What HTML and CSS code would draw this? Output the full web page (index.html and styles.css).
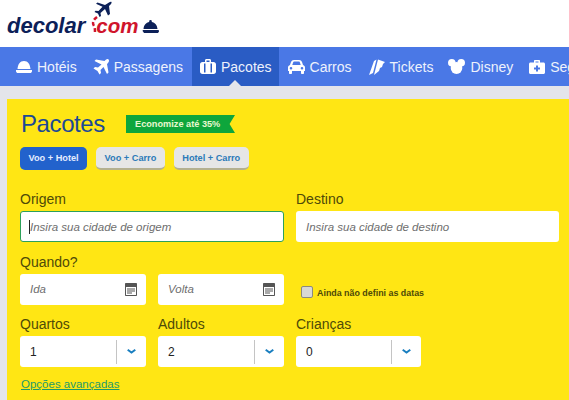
FILE: index.html
```html
<!DOCTYPE html>
<html lang="pt">
<head>
  <meta charset="UTF-8">
  <meta name="viewport" content="width=device-width, initial-scale=1.0">
  <title>Decolar - Pacotes</title>
  <link rel="stylesheet" href="styles.css">
</head>
<body>
  <header class="top">
    <div class="logo">
      <span class="logo-name">decolar</span>
      <svg class="logo-mark" width="24" height="38" viewBox="0 0 24 38">
        <path fill="#0c2058" d="M21 2.500c1.500-1 3-1 2.500.5-.3 1-1.300 2-2.500 3l1 8-2 1.500-3-6.500-4.500 4 .5 3-1.500 1-1.500-3.500-3.500-1.500 1-1.300 3 .3 4-4.300-6.500-3L9.500 2.500l7.500 2.500z"/>
        <path fill="none" stroke="#d0142c" stroke-width="2.500" stroke-dasharray="4 2.500" d="M9 17c-4 3-5 6-3 9 1 1.500 1 4 1 8"/>
      </svg>
      <span class="logo-com">com</span>
      <svg class="logo-bell" width="17" height="14" viewBox="0 0 17 14">
        <path fill="#0c2058" d="M8.500 0a1.300 1.300 0 0 1 1.200 1.900C13 2.400 15.200 5 15.500 9h-14C1.800 5 4 2.400 7.300 1.900A1.300 1.300 0 0 1 8.500 0zM1 10h15a1 1 0 0 1 1 1.500l-1 1.500H2l-1-1.500A1 1 0 0 1 1 10z"/>
      </svg>
    </div>
  </header>

  <nav class="nav">
    <a class="nav-item nav-item-flush">
      <svg width="16" height="12" viewBox="0 0 16 12"><path fill="#fff" d="M8 0c4 0 6 3 6.500 8H1.500C2 3 4 0 8 0zM0 9h16v1.500L15 12H1L0 10.500z"/></svg>
      Hotéis
    </a>
    <a class="nav-item">
      <svg width="16" height="16" viewBox="0 0 16 16"><path fill="#fff" d="M15.500.5c1 1 .5 2.500-1.500 4.500l1.500 8.500-1.500 1.500-3.500-7L7.500 11l.5 3-1.500 1.500L4.500 12 .5 9.500 2 8l3 .5 3.500-3-7-3.500L3 .5l8.500 1.500C13 .5 14.500-.5 15.500.5z"/></svg>
      Passagens
    </a>
    <a class="nav-item nav-item-active">
      <svg width="16" height="15" viewBox="0 0 16 15"><path fill="#fff" fill-rule="evenodd" d="M5 3V1.500C5 .500 5.700 0 6.500 0h3C10.300 0 11 .500 11 1.500V3h2.500C15 3 16 4 16 5.500v7c0 1.500-1 2.500-2.500 2.500h-11C1 15 0 14 0 12.500v-7C0 4 1 3 2.500 3zm1.500 0h3V1.500h-3zM4 4.500V13.500h1.500V4.500zm6.500 0V13.500H12V4.500z"/></svg>
      Pacotes
    </a>
    <a class="nav-item">
      <svg width="17" height="14" viewBox="0 0 17 14"><path fill="#fff" fill-rule="evenodd" d="M3 2C3.500.700 4.500 0 6 0h5c1.500 0 2.500.700 3 2l1 3c1.300.400 2 1.300 2 2.500V11h-1v2c0 .600-.400 1-1 1h-1c-.600 0-1-.400-1-1v-2H4v2c0 .600-.400 1-1 1H2c-.600 0-1-.400-1-1v-2H0V7.500C0 6.300.700 5.400 2 5zm1.300 3h8.400l-.8-2.500c-.2-.6-.5-1-1.200-1H6.300c-.7 0-1 .4-1.200 1zM3 7a1.300 1.300 0 1 0 0 2.600A1.300 1.300 0 0 0 3 7zm11 0a1.300 1.300 0 1 0 0 2.600A1.300 1.300 0 0 0 14 7z"/></svg>
      Carros
    </a>
    <a class="nav-item nav-item-tight">
      <svg width="16" height="16" viewBox="0 0 16 16"><path fill="#fff" d="M5 2l2.500-1.500L4 14l-4 2zM9 .5L16 3l-2 2-1 3-2 1-1 3-5 4z"/></svg>
      Tickets
    </a>
    <a class="nav-item nav-item-flush">
      <svg width="17" height="15" viewBox="0 0 17 15"><g fill="#fff"><circle cx="3.800" cy="3.800" r="3.800"/><circle cx="13.200" cy="3.800" r="3.800"/><ellipse cx="8.500" cy="9" rx="5.800" ry="6"/></g></svg>
      Disney
    </a>
    <a class="nav-item">
      <svg width="16" height="14" viewBox="0 0 16 14"><path fill="#fff" fill-rule="evenodd" d="M5 2.500V1c0-.6.400-1 1-1h4c.6 0 1 .4 1 1v1.500h3.500c.8 0 1.500.7 1.500 1.500v8.500c0 .8-.7 1.500-1.500 1.500h-13C.7 14 0 13.300 0 12.500V4c0-.8.700-1.500 1.500-1.500zm1.500 0h3v-1h-3zM7 5.500V7.500H5V9.500H7V11.500H9V9.500H11V7.500H9V5.500z"/></svg>
      Seguros
    </a>
  </nav>

  <main class="page">
    <section class="panel">
      <div class="panel-head">
        <h1 class="panel-title">Pacotes</h1>
        <span class="promo">Economize até 35%</span>
      </div>

      <div class="tabs">
        <button class="tab tab-active">Voo + Hotel</button>
        <button class="tab">Voo + Carro</button>
        <button class="tab">Hotel + Carro</button>
      </div>

      <div class="form-grid">
        <div class="field field-wide">
          <label class="field-label">Origem</label>
          <div class="box box-focus"><span class="caret"></span><span class="hint">Insira sua cidade de origem</span></div>
        </div>
        <div class="field">
          <label class="field-label">Destino</label>
          <div class="box"><span class="hint">Insira sua cidade de destino</span></div>
        </div>

        <div class="field">
          <label class="field-label">Quando?</label>
          <div class="box">
            <span class="hint">Ida</span>
            <svg class="cal" width="12" height="13" viewBox="0 0 12 13"><path fill="#555" fill-rule="evenodd" d="M1 0h10c.6 0 1 .4 1 1v11c0 .6-.4 1-1 1H1c-.6 0-1-.4-1-1V1c0-.6.400-1 1-1zm0 4v8h10V4zm1 1.500h8v1H2zm0 2h8v1H2zm0 2h5v1H2z"/></svg>
          </div>
        </div>
        <div class="field field-end">
          <div class="box">
            <span class="hint">Volta</span>
            <svg class="cal" width="12" height="13" viewBox="0 0 12 13"><path fill="#555" fill-rule="evenodd" d="M1 0h10c.6 0 1 .4 1 1v11c0 .6-.4 1-1 1H1c-.6 0-1-.4-1-1V1c0-.6.400-1 1-1zm0 4v8h10V4zm1 1.500h8v1H2zm0 2h8v1H2zm0 2h5v1H2z"/></svg>
          </div>
        </div>
        <div class="field field-end">
          <label class="check"><span class="check-box"></span>Ainda não defini as datas</label>
        </div>

        <div class="field">
          <label class="field-label">Quartos</label>
          <div class="select"><span class="select-value">1</span><span class="select-arrow"><svg width="9" height="5" viewBox="0 0 9 5"><path fill="none" stroke="#1a7fc0" stroke-width="2" d="M.7 .8L4.500 3.600 8.300 .8"/></svg></span></div>
        </div>
        <div class="field">
          <label class="field-label">Adultos</label>
          <div class="select"><span class="select-value">2</span><span class="select-arrow"><svg width="9" height="5" viewBox="0 0 9 5"><path fill="none" stroke="#1a7fc0" stroke-width="2" d="M.7 .8L4.500 3.600 8.300 .8"/></svg></span></div>
        </div>
        <div class="field field-small">
          <label class="field-label">Crianças</label>
          <div class="select"><span class="select-value">0</span><span class="select-arrow"><svg width="9" height="5" viewBox="0 0 9 5"><path fill="none" stroke="#1a7fc0" stroke-width="2" d="M.7 .8L4.500 3.600 8.300 .8"/></svg></span></div>
        </div>
      </div>

      <a class="more">Opções avançadas</a>
    </section>
  </main>
</body>
</html>
```

FILE: styles.css
```css
html, body {
  height: 400px;
  overflow: hidden;
}
body {
  margin: 0;
  font-family: 'Liberation Sans', Arial, sans-serif;
  background: #e4e5ea;
}
.top {
  height: 47px;
  background: #fff;
  box-sizing: border-box;
  padding-left: 7px;
}
.logo {
  display: flex;
  align-items: flex-start;
  height: 47px;
}
.logo-name, .logo-com {
  font-size: 22px;
  font-weight: bold;
  font-style: italic;
  line-height: 26px;
  margin-top: 13px;
}
.logo-name {
  color: #0c2058;
}
.logo-com {
  color: #d0142c;
  font-size: 20.500px;
}
.logo-mark {
  margin: 0 -16px 0 3px;
  flex: none;
}
.logo-bell {
  margin: 20px 0 0 4px;
}

.nav {
  height: 39px;
  background: #4a78e6;
  display: flex;
  padding-left: 8px;
  overflow: hidden;
}
.nav-item {
  display: flex;
  align-items: center;
  gap: 5px;
  padding: 0 8px;
  margin-right: 1px;
  color: #eef2fc;
  font-size: 14px;
  white-space: nowrap;
  position: relative;
}
.nav-item svg {
  flex: none;
}
.nav-item-flush {
  margin-right: 0;
}
.nav-item-tight {
  margin-right: -1px;
}
.nav-item-active {
  background: #2a5cc4;
  padding-right: 7px;
}
.nav-item-active::after {
  content: "";
  position: absolute;
  left: 37px;
  bottom: 0;
  border: 6px solid transparent;
  border-top: 0;
  border-bottom-color: #e4e5ea;
}

.page {
  padding: 13px 0 0 7px;
}
.panel {
  background: #ffe614;
  height: 301px;
  box-sizing: border-box;
  padding: 12px 10px 0 13px;
}
.panel-head {
  display: flex;
  align-items: center;
  height: 26px;
}
.panel-title {
  margin: 0 0 0 1px;
  width: 105px;
  font-size: 24px;
  font-weight: normal;
  color: #1c4a94;
  letter-spacing: -0.4px;
}
.promo {
  width: 109px;
  height: 18px;
  box-sizing: border-box;
  padding-left: 9px;
  background: #0ea63c;
  color: #e8f8d0;
  font-size: 9.200px;
  font-weight: bold;
  line-height: 18px;
  clip-path: polygon(0 0, 100% 0, 95% 50%, 100% 100%, 0 100%);
}

.tabs {
  display: flex;
  gap: 9px;
  margin-top: 10px;
}
.tab {
  height: 23px;
  padding: 0 8.500px;
  border: none;
  border-radius: 5px;
  background: #e6e6e6;
  border-bottom: 2px solid #b4b090;
  color: #2c7ab8;
  font-family: inherit;
  font-size: 9.200px;
  font-weight: bold;
}
.tab-active {
  background: #2262cc;
  border-bottom-color: #2262cc;
  color: #e4ecff;
}

.form-grid {
  display: grid;
  grid-template-columns: 126px 126px 263px;
  column-gap: 12px;
  row-gap: 11.500px;
  margin-top: 21px;
}
.field {
  display: flex;
  flex-direction: column;
}
.field-wide {
  grid-column: span 2;
}
.field-end {
  justify-content: flex-end;
}
.field-small {
  width: 125px;
}
.field-label {
  font-size: 14px;
  line-height: 17px;
  margin-bottom: 3px;
  color: #4e4a08;
}
.box {
  height: 31px;
  box-sizing: border-box;
  background: #fff;
  border-radius: 3px;
  display: flex;
  align-items: center;
  justify-content: space-between;
  padding: 0 9px 0 10px;
}
.box-focus {
  justify-content: flex-start;
  border: 1px solid #2ca05a;
  padding-left: 8px;
}
.caret {
  width: 1px;
  height: 14px;
  background: #222;
}
.hint {
  font-size: 11.500px;
  font-style: italic;
  color: #6e6e6e;
}
.cal {
  flex: none;
}
.check {
  display: flex;
  align-items: center;
  gap: 4px;
  height: 31px;
  margin-left: 5px;
  padding-top: 7px;
  box-sizing: border-box;
  font-size: 8.900px;
  font-weight: bold;
  color: #4e4a08;
}
.check-box {
  width: 10px;
  height: 10px;
  border: 1px solid #8a8a80;
  border-radius: 2px;
  background: #d8d8d4;
  margin-top: -2px;
}
.select {
  height: 31px;
  background: #fff;
  border-radius: 3px;
  display: flex;
  align-items: center;
}
.select-value {
  flex: 1;
  padding-left: 10px;
  font-size: 12px;
  color: #222;
}
.select-arrow {
  width: 29px;
  height: 24px;
  border-left: 1px solid #c4c4c4;
  display: flex;
  align-items: center;
  justify-content: center;
}
.more {
  display: inline-block;
  margin: 11px 0 0 1px;
  font-size: 11.500px;
  color: #1e9a6a;
  text-decoration: underline;
}
```
